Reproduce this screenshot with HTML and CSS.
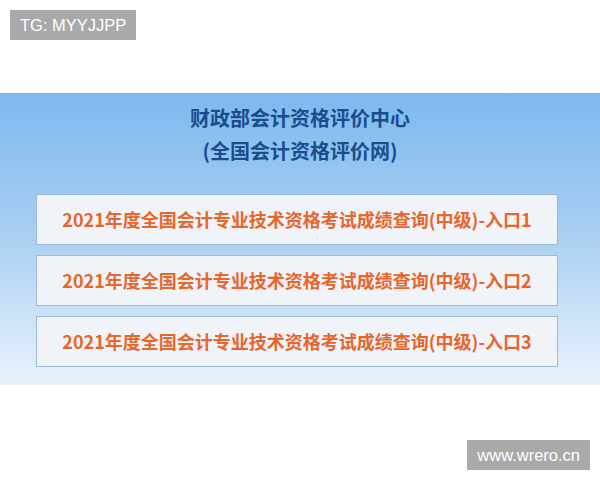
FILE: index.html
```html
<!DOCTYPE html>
<html lang="zh-CN">
<head>
    <meta charset="UTF-8">
    <meta name="viewport" content="width=device-width, initial-scale=1.0">
    <title>全国会计资格评价网 - 成绩查询入口</title>
    <link rel="stylesheet" href="styles.css">
</head>
<body>
    <div class="tag tag-top">TG: MYYJJPP</div>

    <div class="panel">
        <h1 class="title">财政部会计资格评价中心<br>(全国会计资格评价网)</h1>

        <!-- 查询入口 -->
        <div class="links">
            <a class="entry" href="#">2021年度全国会计专业技术资格考试成绩查询(中级)-入口1</a>
            <a class="entry" href="#">2021年度全国会计专业技术资格考试成绩查询(中级)-入口2</a>
            <a class="entry" href="#">2021年度全国会计专业技术资格考试成绩查询(中级)-入口3</a>
        </div>
    </div>

    <div class="tag tag-bottom">www.wrero.cn</div>
</body>
</html>
```

FILE: styles.css
```css
body {
    margin: 0;
    width: 600px;
    height: 480px;
    background-color: #ffffff;
    font-family: 'Noto Sans CJK SC', 'Noto Sans', sans-serif;
    position: relative;
    overflow: hidden;
}
.tag {
    position: absolute;
    background-color: #a9a9a9;
    color: #ffffff;
    font-family: 'Liberation Sans', Arial, sans-serif;
    font-size: 16.5px;
    line-height: 30px;
    height: 30px;
    padding: 0 10px;
}
.tag-top {
    top: 10px;
    left: 10px;
}
.tag-bottom {
    top: 440px;
    right: 10px;
}
.panel {
    margin-top: 93px;
    height: 292px;
    background: linear-gradient(to bottom, #7cb9ef 0%, #a6cdf2 45%, #e9f2fb 100%);
    padding-top: 8px;
    box-sizing: border-box;
}
.title {
    margin: 0;
    text-align: center;
    color: #1a4d8c;
    font-size: 20px;
    font-weight: 700;
    line-height: 33px;
}
.links {
    margin: 27px 42px 0 36px;
    display: flex;
    flex-direction: column;
    gap: 10px;
}
.entry {
    display: block;
    height: 51px;
    box-sizing: border-box;
    border: 1px solid #9bb9d9;
    background-color: #f0f4f9;
    color: #e8652b;
    font-size: 18px;
    font-weight: 700;
    line-height: 49px;
    text-align: center;
    text-decoration: none;
}
```
